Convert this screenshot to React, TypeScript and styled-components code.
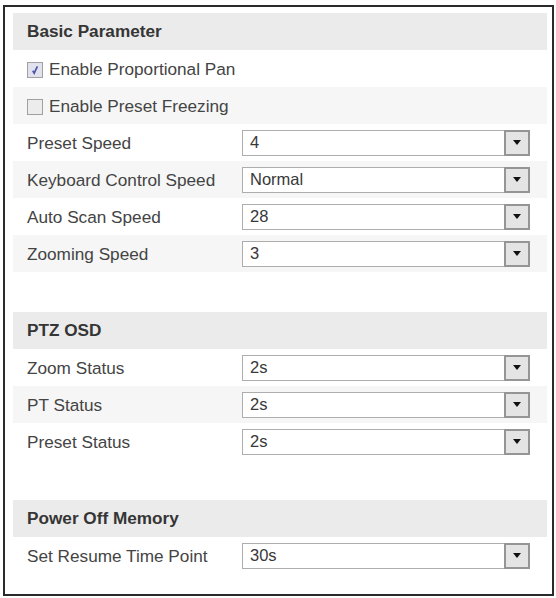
import React from "react";
import styled, { createGlobalStyle } from "styled-components";

const GlobalStyle = createGlobalStyle`
  body {
    margin: 0;
    background: #ffffff;
    font-family: "Liberation Sans", Arial, sans-serif;
  }
`;

const Frame = styled.div`
  box-sizing: border-box;
  width: 551px;
  height: 591px;
  margin: 5px 0 0 3px;
  border: 2px solid #2a2a2a;
  padding: 6px 5px 0 8px;
  display: flex;
  flex-direction: column;
  gap: 40px;
`;

const Section = styled.section`
  display: flex;
  flex-direction: column;
`;

const SectionTitle = styled.div`
  height: 37px;
  display: flex;
  align-items: center;
  padding-left: 14px;
  background: #ebebeb;
  color: #353535;
  font-size: 17.2px;
  font-weight: bold;
`;

const Row = styled.div<{ striped?: boolean }>`
  height: 37px;
  display: flex;
  align-items: center;
  padding-left: 14px;
  padding-top: 2px;
  box-sizing: border-box;
  background: ${({ striped }) => (striped ? "#f6f6f6" : "#ffffff")};
  color: #444;
  font-size: 17.2px;
`;

const Label = styled.span`
  width: 215px;
  flex-shrink: 0;
  white-space: nowrap;
`;

const CheckLabel = styled.label`
  display: flex;
  align-items: center;
  gap: 6px;
  white-space: nowrap;
`;

const Box = styled.span<{ checked?: boolean }>`
  box-sizing: border-box;
  width: 16px;
  height: 16px;
  border: 1px solid #a0a0a0;
  background: ${({ checked }) => (checked ? "#e2e2ee" : "#ececec")};
  display: flex;
  align-items: center;
  justify-content: center;

  svg {
    width: 10px;
    height: 10px;
  }
`;

const Select = styled.div`
  box-sizing: border-box;
  width: 288px;
  height: 26px;
  margin-top: -2px;
  border: 1px solid #adadad;
  background: #fff;
  display: flex;
  align-items: center;
  justify-content: space-between;
  padding-left: 7px;
  color: #383838;
  font-size: 16.5px;
`;

const Arrow = styled.span`
  box-sizing: border-box;
  width: 26px;
  height: 26px;
  margin-right: -1px;
  border: 2px solid #959595;
  background: #e4e4e4;
  display: flex;
  align-items: center;
  justify-content: center;

  &::after {
    content: "";
    border-left: 4.5px solid transparent;
    border-right: 4.5px solid transparent;
    border-top: 5px solid #111;
  }
`;

type Field =
  | { kind: "check"; name: string; checked: boolean }
  | { kind: "select"; name: string; value: string };

const sections: { title: string; fields: Field[] }[] = [
  {
    title: "Basic Parameter",
    fields: [
      { kind: "check", name: "Enable Proportional Pan", checked: true },
      { kind: "check", name: "Enable Preset Freezing", checked: false },
      { kind: "select", name: "Preset Speed", value: "4" },
      { kind: "select", name: "Keyboard Control Speed", value: "Normal" },
      { kind: "select", name: "Auto Scan Speed", value: "28" },
      { kind: "select", name: "Zooming Speed", value: "3" },
    ],
  },
  {
    title: "PTZ OSD",
    fields: [
      { kind: "select", name: "Zoom Status", value: "2s" },
      { kind: "select", name: "PT Status", value: "2s" },
      { kind: "select", name: "Preset Status", value: "2s" },
    ],
  },
  {
    title: "Power Off Memory",
    fields: [{ kind: "select", name: "Set Resume Time Point", value: "30s" }],
  },
];

const Check = () => (
  <svg viewBox="0 0 10 10">
    <path d="M2.8 5.8 L4.2 8.2 L7.4 1.4" fill="none" stroke="#4a58a8" strokeWidth="1.7" />
  </svg>
);

const App: React.FC = () => (
  <>
    <GlobalStyle />
    <Frame>
      {sections.map((section) => (
        <Section key={section.title}>
          <SectionTitle>{section.title}</SectionTitle>
          {section.fields.map((field, i) => (
            <Row key={field.name} striped={i % 2 === 1}>
              {field.kind === "check" ? (
                <CheckLabel>
                  <Box checked={field.checked}>{field.checked && <Check />}</Box>
                  {field.name}
                </CheckLabel>
              ) : (
                <>
                  <Label>{field.name}</Label>
                  <Select>
                    {field.value}
                    <Arrow />
                  </Select>
                </>
              )}
            </Row>
          ))}
        </Section>
      ))}
    </Frame>
  </>
);

export default App;
